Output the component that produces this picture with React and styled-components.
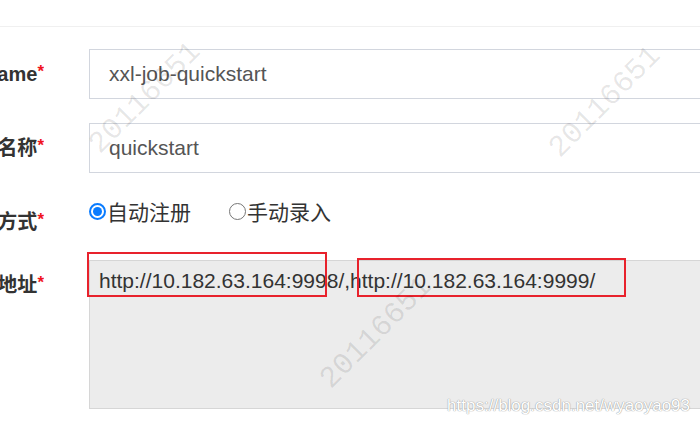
import React from 'react';
import styled, { createGlobalStyle } from 'styled-components';

const GlobalStyle = createGlobalStyle`
  html, body {
    margin: 0;
    padding: 0;
    background: #fff;
    overflow: hidden;
  }
`;

const Page = styled.div`
  position: relative;
  width: 700px;
  height: 423px;
  overflow: hidden;
  background: #fff;
  font-family: "Liberation Sans", "Noto Sans CJK SC", sans-serif;
`;

const ModalHeader = styled.div`
  height: 26px;
  border-bottom: 1px solid #f0f0f0;
`;

const Form = styled.form`
  width: 820px;
  padding-top: 22px;
  display: flex;
  flex-direction: column;
  gap: 24px;
`;

const Row = styled.div`
  display: flex;
  align-items: flex-start;
`;

const Label = styled.label`
  width: 44px;
  flex-shrink: 0;
  margin-right: 45px;
  padding-top: 11px;
  display: flex;
  justify-content: flex-end;
  overflow: hidden;
  white-space: nowrap;
  font-size: 20px;
  line-height: 28px;
  font-weight: bold;
  color: #333;
`;

const Required = styled.span`
  color: #f0141e;
  font-size: 17px;
  line-height: 16px;
  margin-top: 4px;
  font-family: "Liberation Sans", sans-serif;
`;

const TextInput = styled.input`
  flex: 1;
  height: 50px;
  box-sizing: border-box;
  border: 1px solid #d2d6de;
  padding: 0 19px;
  font-family: "Liberation Sans", sans-serif;
  font-size: 21px;
  color: #555;
  background: #fff;
  outline: none;
`;

const RadioGroup = styled.div`
  display: flex;
  gap: 38px;
  padding-top: 2px;
  font-size: 21px;
  line-height: 28px;
  color: #333;
`;

const RadioOption = styled.label`
  display: flex;
  align-items: center;
  gap: 1px;
`;

const RadioCircle = styled.span`
  width: 17px;
  height: 17px;
  margin-bottom: 4px;
  box-sizing: border-box;
  border-radius: 50%;
  border: ${p => (p.$checked ? '2px solid #0a7cff' : '1px solid #767676')};
  background: #fff;
  display: inline-flex;
  align-items: center;
  justify-content: center;

  &::after {
    content: '';
    width: 9px;
    height: 9px;
    border-radius: 50%;
    background: ${p => (p.$checked ? '#0a7cff' : 'transparent')};
  }
`;

const AddressField = styled.div`
  position: relative;
  flex: 1;
  display: flex;
`;

const AddressArea = styled.textarea`
  flex: 1;
  height: 149px;
  box-sizing: border-box;
  border: 1px solid #d6d6d6;
  background: #ececec;
  padding: 5px 9px;
  font-family: "Liberation Sans", sans-serif;
  font-size: 21px;
  line-height: 30px;
  color: #333;
  resize: none;
  outline: none;
`;

const Highlight = styled.div`
  position: absolute;
  box-sizing: border-box;
  border: 2px solid #e8222c;
  pointer-events: none;
`;

const Watermark = styled.span`
  position: absolute;
  transform: translate(-50%, -50%) rotate(-45deg);
  font-family: "Liberation Mono", monospace;
  font-size: 30px;
  color: rgba(0, 0, 0, 0.1);
  white-space: nowrap;
  pointer-events: none;
`;

const SiteMark = styled.span`
  position: absolute;
  right: 10px;
  bottom: 7px;
  font-family: "Liberation Sans", sans-serif;
  font-size: 17px;
  color: #fff;
  text-shadow: 0 0 1px #9a9a9a, 0 0 1px #9a9a9a;
  white-space: nowrap;
`;

const marks = [
  { x: 145, y: 98 },
  { x: 605, y: 102 },
  { x: 376, y: 333 },
];

const App = () => {
  return (
    <Page>
      <GlobalStyle />
      <ModalHeader />
      <Form onSubmit={e => e.preventDefault()}>
        <Row>
          <Label>AppName<Required>*</Required></Label>
          <TextInput defaultValue="xxl-job-quickstart" />
        </Row>
        <Row>
          <Label>名称<Required>*</Required></Label>
          <TextInput defaultValue="quickstart" />
        </Row>
        <Row>
          <Label>注册方式<Required>*</Required></Label>
          <RadioGroup>
            <RadioOption>
              <RadioCircle $checked />
              自动注册
            </RadioOption>
            <RadioOption>
              <RadioCircle />
              手动录入
            </RadioOption>
          </RadioGroup>
        </Row>
        <Row>
          <Label>机器地址<Required>*</Required></Label>
          <AddressField>
            <AddressArea
              readOnly
              defaultValue="http://10.182.63.164:9998/,http://10.182.63.164:9999/"
            />
            <Highlight style={{ left: -2, top: -8, width: 240, height: 45 }} />
            <Highlight style={{ left: 268, top: -2, width: 269, height: 39 }} />
          </AddressField>
        </Row>
      </Form>
      {marks.map((m, idx) => (
        <Watermark key={idx} style={{ left: m.x, top: m.y }}>20116651</Watermark>
      ))}
      <SiteMark>https://blog.csdn.net/wyaoyao93</SiteMark>
    </Page>
  );
};

export default App;
